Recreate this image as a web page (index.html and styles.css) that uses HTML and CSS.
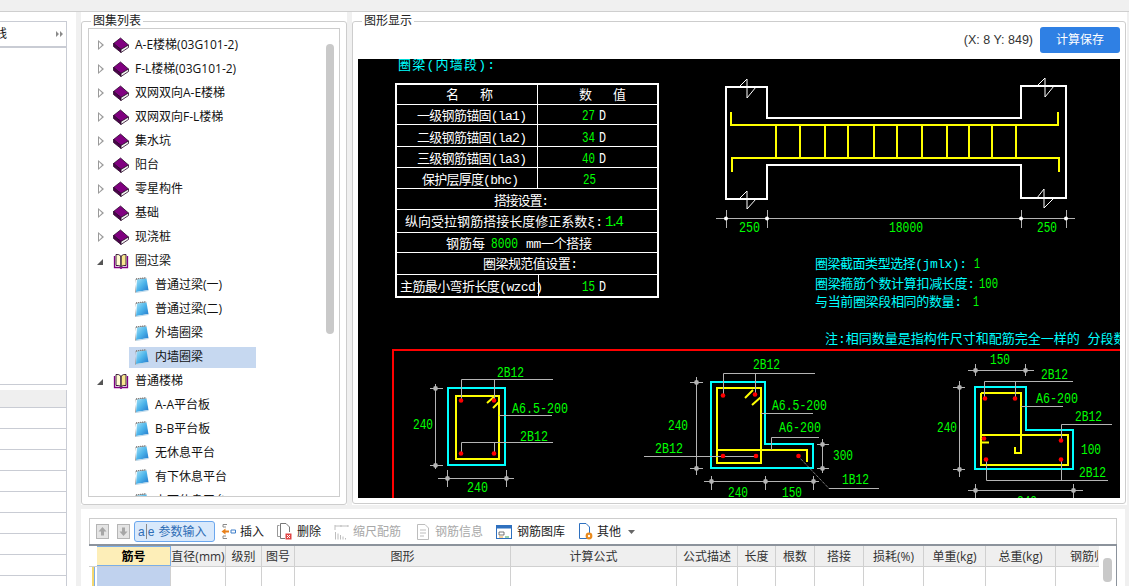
FILE: index.html
```html
<!DOCTYPE html>
<html lang="zh-CN">
<head>
<meta charset="utf-8">
<title>图集列表</title>
<link rel="stylesheet" href="styles.css">
</head>
<body>
<svg class="defs" width="0" height="0" aria-hidden="true">
  <defs>
    <linearGradient id="sheetfill" x1="0" y1="0" x2="1" y2="1">
      <stop offset="0" stop-color="#a4e2f6"/>
      <stop offset="0.5" stop-color="#4cb4ea"/>
      <stop offset="1" stop-color="#2378cc"/>
    </linearGradient>
    <symbol id="book" viewBox="0 0 16 16">
      <path d="M0.5 6.5 L7.5 1 L15.5 8 L8 12.5 Z" fill="#800080" stroke="#2a0a2a" stroke-width="0.8"/>
      <path d="M0.5 6.5 L8 12.5 L8 15.5 L0.5 9.5 Z" fill="#4d004d" stroke="#2a0a2a" stroke-width="0.8"/>
      <path d="M8 12.5 L15.5 8 L15.5 10.5 L8 15.5 Z" fill="#f2f2f2" stroke="#2a0a2a" stroke-width="0.8"/>
    </symbol>
    <symbol id="openbook" viewBox="0 0 16 16">
      <path d="M1.5 3 V14.5 H7 L8 15.5 L9 14.5 H14.5 V3" fill="#fff" stroke="#800080" stroke-width="1.3"/>
      <path d="M3 1.5 Q6 1 7.8 3 V13.5 Q6 12 3 12.5 Z" fill="#fffbd0" stroke="#2a0a2a" stroke-width="0.9"/>
      <path d="M13 1.5 Q10 1 8.2 3 V13.5 Q10 12 13 12.5 Z" fill="#f7e88e" stroke="#2a0a2a" stroke-width="0.9"/>
    </symbol>
    <symbol id="sheet" viewBox="0 0 14 16">
      <path d="M0.5 2 L11 0.5 L11.5 1.5 L1 3 L0 15.5 L1 15.8 Z" fill="#9a9a9a"/>
      <path d="M2 2.5 L11.5 1.5 L13.5 13 L1 15 Z" fill="url(#sheetfill)"/>
      <path d="M1 15 L13.5 13 L13.5 14 L1 16 Z" fill="#b9d6e8"/>
      <path d="M1 1.8 L11 0.8" stroke="#808080" stroke-width="1.2" stroke-dasharray="1 1" fill="none"/>
    </symbol>
  </defs>
</svg>

<div class="topbar"></div>

<div class="workspace">
  <aside class="leftcol">
    <div class="leftpane">
      <div class="lefthead">
        <span class="lefttab">线</span>
        <svg class="leftmore" width="7" height="6" viewBox="0 0 7 6"><path d="M0 0 L3 3 L0 6 Z M4 0 L7 3 L4 6 Z" fill="#8a8a8a"/></svg>
      </div>
    </div>
    <div class="leftlist">
      <div class="leftlisthead"></div>
      <div class="leftrow"></div><div class="leftrow"></div><div class="leftrow"></div>
      <div class="leftrow"></div><div class="leftrow"></div><div class="leftrow"></div>
      <div class="leftrow"></div><div class="leftrow"></div>
    </div>
  </aside>

  <div class="rightcol">
    <div class="upper">
      <section class="panel treepanel">
        <fieldset class="group treegroup">
          <legend class="grouptitle">图集列表</legend>
          <div class="treebox">
            <div class="thumb"></div>
            <div class="node"><span class="arrow"></span><svg class="ico-book"><use href="#book"/></svg><span>A-E楼梯(03G101-2)</span></div>
            <div class="node"><span class="arrow"></span><svg class="ico-book"><use href="#book"/></svg><span>F-L楼梯(03G101-2)</span></div>
            <div class="node"><span class="arrow"></span><svg class="ico-book"><use href="#book"/></svg><span>双网双向A-E楼梯</span></div>
            <div class="node"><span class="arrow"></span><svg class="ico-book"><use href="#book"/></svg><span>双网双向F-L楼梯</span></div>
            <div class="node"><span class="arrow"></span><svg class="ico-book"><use href="#book"/></svg><span>集水坑</span></div>
            <div class="node"><span class="arrow"></span><svg class="ico-book"><use href="#book"/></svg><span>阳台</span></div>
            <div class="node"><span class="arrow"></span><svg class="ico-book"><use href="#book"/></svg><span>零星构件</span></div>
            <div class="node"><span class="arrow"></span><svg class="ico-book"><use href="#book"/></svg><span>基础</span></div>
            <div class="node"><span class="arrow"></span><svg class="ico-book"><use href="#book"/></svg><span>现浇桩</span></div>
            <div class="node"><span class="arrow open"></span><svg class="ico-book"><use href="#openbook"/></svg><span>圈过梁</span></div>
            <div class="leaf"><span class="leafin"><svg class="ico-sheet"><use href="#sheet"/></svg><span>普通过梁(一)</span></span></div>
            <div class="leaf"><span class="leafin"><svg class="ico-sheet"><use href="#sheet"/></svg><span>普通过梁(二)</span></span></div>
            <div class="leaf"><span class="leafin"><svg class="ico-sheet"><use href="#sheet"/></svg><span>外墙圈梁</span></span></div>
            <div class="leaf"><span class="leafin selected"><svg class="ico-sheet"><use href="#sheet"/></svg><span>内墙圈梁</span></span></div>
            <div class="node"><span class="arrow open"></span><svg class="ico-book"><use href="#openbook"/></svg><span>普通楼梯</span></div>
            <div class="leaf"><span class="leafin"><svg class="ico-sheet"><use href="#sheet"/></svg><span>A-A平台板</span></span></div>
            <div class="leaf"><span class="leafin"><svg class="ico-sheet"><use href="#sheet"/></svg><span>B-B平台板</span></span></div>
            <div class="leaf"><span class="leafin"><svg class="ico-sheet"><use href="#sheet"/></svg><span>无休息平台</span></span></div>
            <div class="leaf"><span class="leafin"><svg class="ico-sheet"><use href="#sheet"/></svg><span>有下休息平台</span></span></div>
            <div class="leaf"><span class="leafin"><svg class="ico-sheet"><use href="#sheet"/></svg><span>上下休息平台</span></span></div>
          </div>
        </fieldset>
      </section>

      <section class="panel figpanel">
        <fieldset class="group figgroup">
          <legend class="grouptitle">图形显示</legend>
          <div class="figbar">
            <span class="coords">(X: 8 Y: 849)</span>
            <button class="savebtn" type="button">计算保存</button>
          </div>
          <svg class="cad" width="762" height="439" viewBox="358 59 762 439">
            <!-- parameter table -->
            <g class="ln-w2">
              <rect x="396" y="84" width="262" height="213"/>
            </g>
            <g class="ln-w1">
              <path d="M397 104.5H657M397 124.5H657M397 146.5H657M397 167.5H657M397 188.5H657M397 209.5H657M397 232.5H657M397 252.5H657M397 274.5H657M537.5 85V188M538.5 275V296"/>
            </g>
            <text class="t c" x="398" y="69" textLength="97">圈梁(内墙段):</text>
            <text class="t w" x="446" y="99">名</text><text class="t w" x="480" y="99">称</text>
            <text class="t w" x="579" y="99">数</text><text class="t w" x="613" y="99">值</text>
            <text class="t w" x="417" y="120" textLength="110">一级钢筋锚固(la1)</text>
            <text class="t w" x="417" y="142" textLength="110">二级钢筋锚固(la2)</text>
            <text class="t w" x="417" y="163" textLength="110">三级钢筋锚固(la3)</text>
            <text class="t w" x="422" y="184" textLength="97">保护层厚度(bhc)</text>
            <text class="t w" x="494" y="205" textLength="55">搭接设置:</text>
            <text class="t w" x="405" y="226" textLength="198">纵向受拉钢筋搭接长度修正系数ξ:</text>
            <text class="t w" x="446" y="248" textLength="39">钢筋每</text>
            <text class="t w" x="526" y="248" textLength="66">mm一个搭接</text>
            <text class="t w" x="483" y="268" textLength="95">圈梁规范值设置:</text>
            <text class="t w" x="400" y="291" textLength="143">主筋最小弯折长度(wzcd)</text>
            <text class="n g" x="582" y="120" textLength="13" lengthAdjust="spacingAndGlyphs">27</text><text class="n w" x="599" y="120" textLength="7" lengthAdjust="spacingAndGlyphs">D</text>
            <text class="n g" x="582" y="142" textLength="13" lengthAdjust="spacingAndGlyphs">34</text><text class="n w" x="599" y="142" textLength="7" lengthAdjust="spacingAndGlyphs">D</text>
            <text class="n g" x="582" y="163" textLength="13" lengthAdjust="spacingAndGlyphs">40</text><text class="n w" x="599" y="163" textLength="7" lengthAdjust="spacingAndGlyphs">D</text>
            <text class="n g" x="583" y="184" textLength="13" lengthAdjust="spacingAndGlyphs">25</text>
            <text class="n g" x="605" y="226" textLength="19">1.4</text>
            <text class="n g" x="491" y="248" textLength="27" lengthAdjust="spacingAndGlyphs">8000</text>
            <text class="n g" x="582" y="291" textLength="13" lengthAdjust="spacingAndGlyphs">15</text><text class="n w" x="599" y="291" textLength="7" lengthAdjust="spacingAndGlyphs">D</text>

            <!-- elevation -->
            <path class="ln-w2" d="M726 87H767V118H1021V86H1066V198H1021V165H767V199H726Z"/>
            <path class="ln-w1b" d="M739 87L747 79V98L756 87M1037 86L1045 78V97L1054 86M739 199L747 191V209L756 199M1037 198L1044 189V208L1054 198"/>
            <path class="ln-y2" d="M731 112V125H1058V112M732 172V158H1059V172M776 125V158M800 125V158M825 125V158M848 125V158M874 125V158M897 125V158M922 125V158M947 125V158M969 125V158M992 125V158M1016 125V158"/>
            <path class="ln-gr" d="M716 218.5H1075M726.5 210V228M767.5 210V228M1021.5 210V228M1066.5 210V228"/>
            <g class="dot-w"><circle cx="726" cy="218.5" r="2"/><circle cx="767" cy="218.5" r="2"/><circle cx="1021" cy="218.5" r="2"/><circle cx="1066" cy="218.5" r="2"/></g>
            <text class="n g" x="739" y="232" textLength="21" lengthAdjust="spacingAndGlyphs">250</text>
            <text class="n g" x="889" y="232" textLength="34" lengthAdjust="spacingAndGlyphs">18000</text>
            <text class="n g" x="1037" y="232" textLength="20" lengthAdjust="spacingAndGlyphs">250</text>

            <text class="t c" x="815" y="268" textLength="152">圈梁截面类型选择(jmlx):</text>
            <text class="n g" x="974" y="268" textLength="6" lengthAdjust="spacingAndGlyphs">1</text>
            <text class="t c" x="815" y="288" textLength="160">圈梁箍筋个数计算扣减长度:</text>
            <text class="n g" x="979" y="288" textLength="19" lengthAdjust="spacingAndGlyphs">100</text>
            <text class="t c" x="815" y="306" textLength="147">与当前圈梁段相同的数量:</text>
            <text class="n g" x="973" y="306" textLength="6" lengthAdjust="spacingAndGlyphs">1</text>
            <text class="t c" x="825" y="343">注:相同数量是指构件尺寸和配筋完全一样的 分段数</text>

            <!-- section frame -->
            <path class="ln-r2" d="M393 498V350H1120"/>

            <!-- section 1 -->
            <rect class="ln-c2" x="448" y="388" width="57" height="77"/>
            <rect class="ln-y2" x="456" y="396" width="43" height="63"/>
            <path class="ln-y2" d="M487 403L495 396M493 408L499 402"/>
            <path class="ln-gr" d="M461.5 401V379.5H553M494.5 379.5V401M499 415.5H552M461.5 453V442.5H553M494.5 442.5V453M435.5 384V469M430 388.5H443M430 465.5H443M438 478.5H514M447.5 470V487M506.5 470V487"/>
            <g class="dot-gr"><circle cx="435.5" cy="388.5" r="2.4"/><circle cx="435.5" cy="465.5" r="2.4"/><circle cx="447.5" cy="478.5" r="2.4"/><circle cx="506.5" cy="478.5" r="2.4"/></g>
            <g class="dot-r"><circle cx="461" cy="400.5" r="2.3"/><circle cx="494" cy="400.5" r="2.3"/><circle cx="461" cy="453.5" r="2.3"/><circle cx="494" cy="453.5" r="2.3"/></g>
            <text class="n g" x="497" y="377" textLength="27" lengthAdjust="spacingAndGlyphs">2B12</text>
            <text class="n g" x="512" y="413" textLength="56" lengthAdjust="spacingAndGlyphs">A6.5-200</text>
            <text class="n g" x="520" y="441" textLength="28" lengthAdjust="spacingAndGlyphs">2B12</text>
            <text class="n g" x="413" y="429" textLength="20" lengthAdjust="spacingAndGlyphs">240</text>
            <text class="n g" x="467" y="492" textLength="21" lengthAdjust="spacingAndGlyphs">240</text>

            <!-- section 2 -->
            <path class="ln-c2" d="M711 382H765V444H813V468H711Z"/>
            <path class="ln-y2" d="M717 388H761V463H717ZM717 450H807V462M745 398L753 390M752 405L761 397"/>
            <path class="ln-gr" d="M723.5 395V373.5H815M755.5 373.5V394M761 413.5H813M771.5 450V437.5H819M644 456.5H757M696.5 377V475M690 382.5H703M690 468.5H703M822.5 439V473M817 444.5H829M817 468.5H829M704 481.5H819M711.5 476V490M765.5 476V490M813.5 476V490M829 488.5H879"/>
            <path class="ln-dash" d="M798 456L829 488.5"/>
            <g class="dot-gr"><circle cx="696.5" cy="382.5" r="2.4"/><circle cx="696.5" cy="468.5" r="2.4"/><circle cx="822.5" cy="444.5" r="2.4"/><circle cx="822.5" cy="468.5" r="2.4"/><circle cx="711.5" cy="481.5" r="2.4"/><circle cx="765.5" cy="481.5" r="2.4"/><circle cx="813.5" cy="481.5" r="2.4"/></g>
            <g class="dot-r"><circle cx="723" cy="395.5" r="2.3"/><circle cx="755" cy="394.5" r="2.3"/><circle cx="723" cy="456" r="2.3"/><circle cx="756" cy="456" r="2.3"/><circle cx="798.5" cy="456" r="2.3"/></g>
            <text class="n g" x="753" y="369" textLength="27" lengthAdjust="spacingAndGlyphs">2B12</text>
            <text class="n g" x="772" y="410" textLength="55" lengthAdjust="spacingAndGlyphs">A6.5-200</text>
            <text class="n g" x="779" y="432" textLength="42" lengthAdjust="spacingAndGlyphs">A6-200</text>
            <text class="n g" x="655" y="453" textLength="28" lengthAdjust="spacingAndGlyphs">2B12</text>
            <text class="n g" x="668" y="430" textLength="20" lengthAdjust="spacingAndGlyphs">240</text>
            <text class="n g" x="833" y="460" textLength="20" lengthAdjust="spacingAndGlyphs">300</text>
            <text class="n g" x="842" y="484" textLength="27" lengthAdjust="spacingAndGlyphs">1B12</text>
            <text class="n g" x="728" y="497" textLength="20" lengthAdjust="spacingAndGlyphs">240</text>
            <text class="n g" x="782" y="497" textLength="20" lengthAdjust="spacingAndGlyphs">150</text>

            <!-- section 3 -->
            <path class="ln-c2" d="M975 387H1026V430H1073V469H975Z"/>
            <path class="ln-y2" d="M981 393H1021V453H1015V447M981 435H1068V465H981V393M981 442.5H989"/>
            <path class="ln-gr" d="M984.5 398V381.5H1073M1015.5 381.5V398M1021 406.5H1063M1061.5 440V424.5H1112M986.5 459V480.5H1108M1061.5 459V480.5M968 370.5H1034M975.5 364V376M1025.5 364V376M959.5 381V477M953 387.5H965M953 469.5H965M968 490.5H1083M975.5 484V498M1073.5 484V498"/>
            <g class="dot-gr"><circle cx="975.5" cy="370.5" r="2.4"/><circle cx="1025.5" cy="370.5" r="2.4"/><circle cx="959.5" cy="387.5" r="2.4"/><circle cx="959.5" cy="469.5" r="2.4"/><circle cx="975.5" cy="490.5" r="2.4"/><circle cx="1073.5" cy="490.5" r="2.4"/></g>
            <g class="dot-r"><circle cx="985" cy="398.5" r="2.3"/><circle cx="1015" cy="398.5" r="2.3"/><circle cx="1061" cy="440.5" r="2.3"/><circle cx="984" cy="438.5" r="2.3"/><circle cx="986" cy="459.5" r="2.3"/><circle cx="1061" cy="459.5" r="2.3"/></g>
            <text class="n g" x="990" y="364" textLength="20" lengthAdjust="spacingAndGlyphs">150</text>
            <text class="n g" x="1041" y="379" textLength="27" lengthAdjust="spacingAndGlyphs">2B12</text>
            <text class="n g" x="1036" y="403" textLength="42" lengthAdjust="spacingAndGlyphs">A6-200</text>
            <text class="n g" x="1075" y="421" textLength="27" lengthAdjust="spacingAndGlyphs">2B12</text>
            <text class="n g" x="1081" y="454" textLength="20" lengthAdjust="spacingAndGlyphs">100</text>
            <text class="n g" x="1079" y="477" textLength="27" lengthAdjust="spacingAndGlyphs">2B12</text>
            <text class="n g" x="937" y="432" textLength="20" lengthAdjust="spacingAndGlyphs">240</text>
            <text class="n g" x="1017" y="506" textLength="20" lengthAdjust="spacingAndGlyphs">240</text>
          </svg>
        </fieldset>
      </section>
    </div>

    <section class="panel lower">
      <div class="toolbar">
        <span class="tool tool-arrow"><svg width="13" height="15" viewBox="0 0 13 15"><rect x="0.5" y="0.5" width="12" height="14" fill="#e4e4e4" stroke="#b5b5b5"/><path d="M6.5 3 L10.5 7.5 H8 V11.5 H5 V7.5 H2.5 Z" fill="#a6a6a6"/></svg></span>
        <span class="tool tool-arrow"><svg width="13" height="15" viewBox="0 0 13 15"><rect x="0.5" y="0.5" width="12" height="14" fill="#e4e4e4" stroke="#b5b5b5"/><path d="M6.5 12 L10.5 7.5 H8 V3.5 H5 V7.5 H2.5 Z" fill="#a6a6a6"/></svg></span>
        <span class="tool tool-active">
          <span class="aie">a<i class="aiebar"></i>e</span>
          <span class="toollabel">参数输入</span>
        </span>
        <span class="tool tool-insert">
          <svg width="15" height="17" viewBox="0 0 15 17"><path d="M6 1.5H2V4H5M6 15.5H2V13H5" stroke="#8a8a8a" fill="none"/><path d="M0.5 8.5 L4.5 5.5 V7.5 H8 V9.5 H4.5 V11.5 Z" fill="#e8801a"/><path d="M10 7H14.5V10H10Z" fill="none" stroke="#3f7fc9"/></svg>
          <span class="toollabel">插入</span>
        </span>
        <span class="tool tool-delete">
          <svg width="15" height="17" viewBox="0 0 15 17"><path d="M2.5 2.5H0.5V13.5H3" fill="none" stroke="#999"/><path d="M3.5 0.5H9L12.5 4V9M3.5 .5V15.5H8" fill="#fff" stroke="#777"/><rect x="8.5" y="10.5" width="6" height="6" fill="#e04444"/><path d="M10 12L13 15M13 12L10 15" stroke="#fff"/></svg>
          <span class="toollabel">删除</span>
        </span>
        <span class="tool tool-off tool-scale">
          <svg width="15" height="16" viewBox="0 0 15 16"><path d="M1 2H14M1 1V6M7 1V3M14 1V3" stroke="#bdbdbd" fill="none"/><path d="M1.5 15.5V8M4 15.5V9.5M6.5 15.5V11M9 15.5V12.5M11.5 15.5V14" stroke="#bdbdbd" fill="none"/></svg>
          <span class="toollabel">缩尺配筋</span>
        </span>
        <span class="tool tool-off">
          <svg width="14" height="16" viewBox="0 0 14 16"><path d="M1.5 .5H9L12.5 4V15.5H1.5Z" fill="#fff" stroke="#bdbdbd"/><path d="M4 6H10M4 9H10M4 12H8" stroke="#bdbdbd"/></svg>
          <span class="toollabel">钢筋信息</span>
        </span>
        <span class="tool">
          <svg width="16" height="14" viewBox="0 0 16 14"><rect x="0.5" y="0.5" width="15" height="13" fill="#fff" stroke="#2e70bf"/><rect x="0.5" y="0.5" width="15" height="3" fill="#2e70bf"/><path d="M3 7H8V10H3Z" fill="none" stroke="#555" stroke-width=".8"/><path d="M3 12H7" stroke="#e8a33a"/><path d="M9 12H13" stroke="#3aa35a"/></svg>
          <span class="toollabel">钢筋图库</span>
        </span>
        <span class="tool tool-more">
          <svg width="17" height="18" viewBox="0 0 17 18"><path d="M1.5 .5H8L11.5 4V15.5H1.5Z" fill="#fff" stroke="#2e70bf"/><circle cx="11" cy="13" r="3.4" fill="#ea8a1c"/><circle cx="11" cy="13" r="1.2" fill="#fff"/></svg>
          <span class="toollabel">其他</span>
          <svg class="caret" width="7" height="4" viewBox="0 0 7 4"><path d="M0 0H7L3.5 4Z" fill="#666"/></svg>
        </span>
      </div>
      <div class="grid">
        <div class="gridrow gridhead">
          <span class="cell"></span>
          <span class="cell cell-key">筋号</span>
          <span class="cell">直径(mm)</span>
          <span class="cell">级别</span>
          <span class="cell">图号</span>
          <span class="cell">图形</span>
          <span class="cell">计算公式</span>
          <span class="cell">公式描述</span>
          <span class="cell">长度</span>
          <span class="cell">根数</span>
          <span class="cell">搭接</span>
          <span class="cell">损耗(%)</span>
          <span class="cell">单重(kg)</span>
          <span class="cell">总重(kg)</span>
          <span class="cell cell-clip">钢筋归类</span>
        </div>
        <div class="gridrow">
          <span class="cell cell-mark"></span>
          <span class="cell cell-sel"></span>
          <span class="cell"></span><span class="cell"></span><span class="cell"></span><span class="cell"></span>
          <span class="cell"></span><span class="cell"></span><span class="cell"></span><span class="cell"></span>
          <span class="cell"></span><span class="cell"></span><span class="cell"></span><span class="cell"></span>
          <span class="cell cell-clip"></span>
        </div>
        <div class="gridscroll"></div>
      </div>
    </section>
  </div>
</div>
</body>
</html>
```
FILE: styles.css
```css
* { box-sizing: border-box; }
html, body { margin: 0; height: 100%; }
body {
  width: 1129px;
  height: 586px;
  overflow: hidden;
  background: #f0f0f0;
  color: #111;
  font: 12px/16px "Open Sans", "Noto Sans CJK SC", "Liberation Sans", sans-serif;
}
.defs { position: absolute; }
.topbar { height: 12px; border-bottom: 1px solid #cfcfcf; background: #f0f0f0; }
.workspace { display: flex; gap: 5px; height: 574px; }

/* left column */
.leftcol { width: 76px; background: #fff; display: flex; flex-direction: column; padding-top: 9px; }
.leftpane { width: 67px; height: 364px; border: 1px solid #c9ccd4; border-left: 0; }
.lefthead { height: 26px; border-bottom: 2px solid #c9ccd4; display: flex; align-items: center; justify-content: space-between; padding-right: 3px; overflow: hidden; }
.lefttab { margin-left: -5px; font-size: 12px; }
.leftlist { width: 67px; margin-top: 5px; border-right: 1px solid #c9ccd4; flex: 1; overflow: hidden; }
.leftlisthead { height: 18px; background: #efefef; border-bottom: 1px solid #c9ccd4; }
.leftrow { height: 21px; border-bottom: 1px solid #c9ccd4; margin-top: 0; }

/* main area */
.rightcol { width: 1048px; display: flex; flex-direction: column; gap: 4px; }
.upper { display: flex; gap: 5px; height: 493px; }
.panel { background: #fff; }
.treepanel { width: 266px; padding-top: 3px; }
.figpanel { width: 775px; padding-top: 3px; }
.group { margin: 0; min-width: 0; border: 1px solid #cdcdcd; border-radius: 3px; }
.grouptitle { margin-left: 3px; padding: 0 2px; font-size: 12px; line-height: 12px; color: #222; }
.figgroup .grouptitle { margin-left: 4px; }
.treegroup { width: 266px; height: 490px; padding: 1px 6px 0; }
.figgroup { width: 774px; height: 489px; padding: 0 5px 5px; }

/* tree */
.treebox { position: relative; height: 469px; border: 1px solid #cdcdcd; padding-top: 4px; overflow: hidden; }
.thumb { position: absolute; left: 237px; top: 15px; width: 8px; height: 290px; border-radius: 4px; background: #c9c9c9; }
.node, .leaf { height: 24px; display: flex; align-items: center; white-space: nowrap; }
.node { padding-left: 9px; }
.arrow { width: 6px; height: 10px; margin-right: 9px; position: relative; flex: none; }
.arrow::before { content: ""; position: absolute; left: 0; top: 0; border-left: 6px solid #9a9a9a; border-top: 5px solid transparent; border-bottom: 5px solid transparent; }
.arrow::after { content: ""; position: absolute; left: 1px; top: 2px; border-left: 3px solid #fff; border-top: 3px solid transparent; border-bottom: 3px solid transparent; }
.arrow.open::before { left: -1px; top: 3px; border-left: 6px solid transparent; border-top: 0; border-bottom: 6px solid #555; }
.arrow.open::after { display: none; }
.ico-book { width: 16px; height: 16px; margin-right: 6px; flex: none; }
.leafin { margin-left: 40px; width: 127px; height: 21px; padding-left: 6px; display: flex; align-items: center; }
.ico-sheet { width: 14px; height: 16px; margin-right: 6px; flex: none; }
.selected { background: #c6d8f0; }

/* figure */
.figbar { height: 32px; display: flex; justify-content: flex-end; align-items: center; gap: 7px; padding-bottom: 6px; }
.coords { color: #333; font: 12.5px/16px "Liberation Sans", sans-serif; }
.savebtn { width: 80px; height: 26px; border: 0; border-radius: 3px; background: #2f80e4; color: #fff; font: inherit; padding: 0; }
.cad { display: block; background: #000; }
.t, .n { font-family: "Liberation Mono", "Noto Sans CJK SC", monospace; }
.t { font-size: 13px; }
.n { font-size: 14px; }
.w { fill: #fff; }
.g { fill: #00ff00; }
.c { fill: #00ffff; }
.ln-w2 { fill: none; stroke: #fff; stroke-width: 2; shape-rendering: crispEdges; }
.ln-w2 rect { fill: none; }
.ln-w1 { fill: none; stroke: #fff; stroke-width: 1; shape-rendering: crispEdges; }
.ln-w1b { fill: none; stroke: #fff; stroke-width: 1; }
.ln-y2 { fill: none; stroke: #ffff00; stroke-width: 2; }
.ln-c2 { fill: none; stroke: #00ffff; stroke-width: 2; }
.ln-r2 { fill: none; stroke: #ff0000; stroke-width: 2; }
.ln-gr { fill: none; stroke: #b4b4b4; stroke-width: 1; }
.ln-dash { fill: none; stroke: #b4b4b4; stroke-width: 1; stroke-dasharray: 1 1; }
.dot-w { fill: #fff; }
.dot-gr { fill: #b4b4b4; }
.dot-r { fill: #ff0000; }

/* lower panel */
.lower { width: 1044px; height: 77px; padding: 9px 8px 0; }
.toolbar { height: 26px; border: 1px solid #cdcdcd; border-bottom: 0; display: flex; align-items: center; padding-left: 6px; color: #222; }
.tool { display: flex; align-items: center; height: 21px; gap: 5px; white-space: nowrap; margin-right: 13px; }
.toollabel { padding-top: 1px; }
.tool-arrow { margin-right: 8px; }
.tool-off { color: #a8a8a8; }
.tool-active { width: 81px; margin-right: 6px; margin-left: -4px; padding-left: 3px; background: #d9e9fb; border: 1px solid #6ba7ee; border-radius: 3px; color: #2e6db5; gap: 4px; }
.aie { color: #2e6db5; font: 12px/16px "Liberation Sans", sans-serif; display: flex; align-items: center; }
.aiebar { width: 1px; height: 15px; margin: 0 1px; background: #8a8a8a; }
.tool-insert { gap: 4px; margin-right: 13px; }
.tool-delete { margin-right: 13px; }
.tool-scale { gap: 4px; margin-right: 15px; }
.tool-more { gap: 2px; }
.caret { margin-left: 5px; }
.grid { position: relative; height: 42px; border-top: 2px solid #8c939c; border-right: 1px solid #8c939c; overflow: hidden; }
.gridrow { display: grid; grid-template-columns: 8px 74px 55px 36px 33px 216px 166px 61px 38px 39px 49px 60px 62px 70px 42px; height: 21px; }
.gridhead { background: #efefef; border-bottom: 1px solid #d0d0d0; width: 1010px; }
.cell { border-right: 1px solid #d0d0d0; text-align: center; line-height: 21px; overflow: hidden; white-space: nowrap; color: #333; }
.gridhead > .cell:first-child { background: #fff; border-right: 0; }
.cell-key { background: #fdeeb8; color: #000; font-weight: 700; border-top: 1px solid #7aaee8; border-bottom: 1px solid #7aaee8; border-right-color: #7aaee8; line-height: 19px; }
.cell-clip { text-align: left; padding-left: 14px; border-right: 0; }
.cell-mark { border-right: 0; background: linear-gradient(to right, #fff 3px, #f5d76e 3px, #f5d76e 5px, #7aaee8 5px, #7aaee8 6px, #fff 6px); }
.cell-sel { background: #c0d2ee; }
.gridscroll { position: absolute; right: 4px; top: 12px; width: 9px; height: 24px; border-radius: 4px; background: #c9c9c9; }
```
